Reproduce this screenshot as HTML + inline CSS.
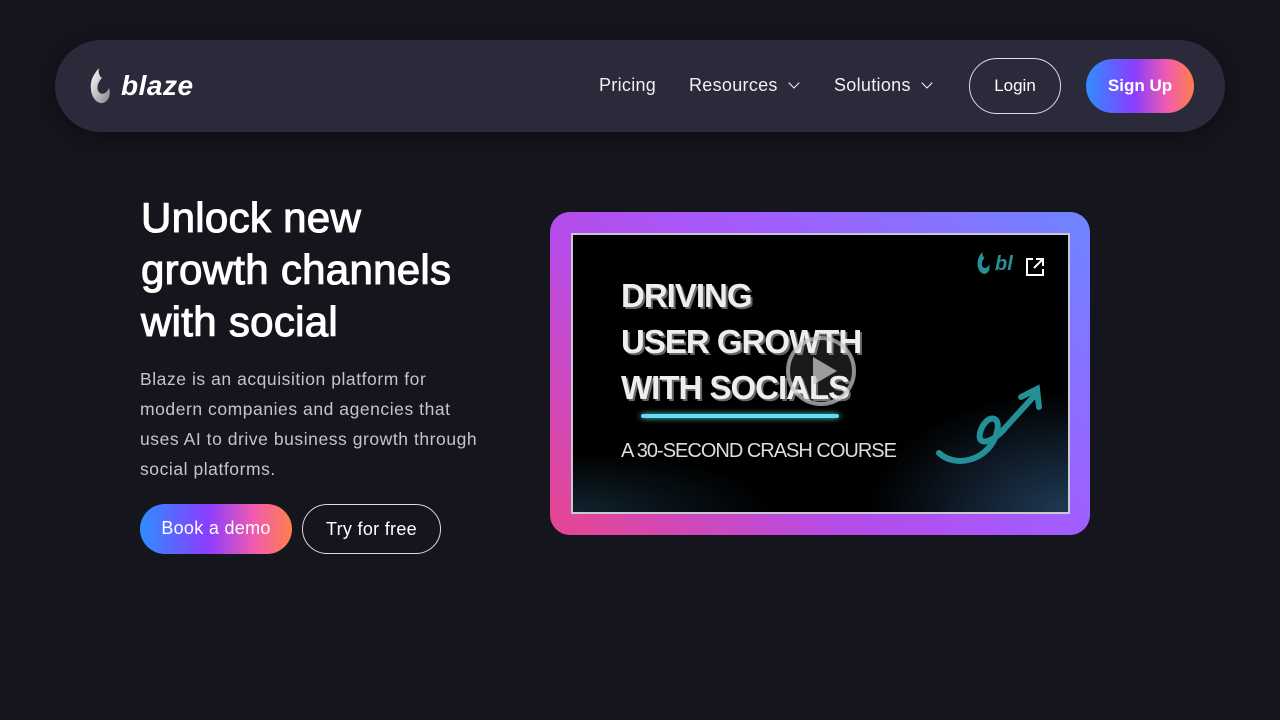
<!DOCTYPE html>
<html><head><meta charset="utf-8"><style>
*{margin:0;padding:0;box-sizing:border-box}
body{width:1280px;height:720px;background:#15151e;font-family:"Liberation Sans",sans-serif;color:#fff;position:relative;overflow:hidden}
.nav{position:absolute;left:55px;top:40px;width:1170px;height:92px;border-radius:46px;background:#2a2a3a;box-shadow:0 4px 20px rgba(0,0,0,.4)}
.logo{position:absolute;left:90px;top:68px;display:flex;align-items:center}
.logo span{font-size:28px;font-weight:bold;font-style:italic;margin-left:9px;letter-spacing:.5px}
.nl{position:absolute;top:75px;font-size:18px;color:#f0f0f5;letter-spacing:.3px}
.chev{display:inline-block;width:8px;height:8px;border-right:1.5px solid #fff;border-bottom:1.5px solid #fff;transform:rotate(45deg);margin-left:12px;position:relative;top:-4px}
.login{position:absolute;left:969px;top:58px;width:92px;height:56px;border:1px solid #ddd;border-radius:28px;text-align:center;line-height:54px;font-size:17px}
.signup{position:absolute;left:1086px;top:59px;width:108px;height:54px;border-radius:27px;background:linear-gradient(90deg,#2f8dff,#8a3dff 45%,#f05bb0 75%,#ff7f4a);text-align:center;line-height:54px;font-size:17px;font-weight:bold}
h1{position:absolute;left:141px;top:192px;font-size:42px;line-height:52px;font-weight:normal;letter-spacing:.3px;-webkit-text-stroke:1.1px #fff}
p{position:absolute;left:140px;top:364px;width:400px;font-size:17.5px;line-height:30px;color:#c4c4cc;letter-spacing:.55px;white-space:nowrap}
.demo{position:absolute;left:140px;top:504px;width:152px;height:50px;border-radius:25px;background:linear-gradient(90deg,#2f8dff,#8a3dff 45%,#f05bb0 75%,#ff7f4a);text-align:center;line-height:48px;font-size:18px;letter-spacing:.3px}
.try{position:absolute;left:302px;top:504px;width:139px;height:50px;border-radius:25px;border:1px solid #ddd;text-align:center;line-height:48px;font-size:18px;letter-spacing:.3px}
.vid{position:absolute;left:550px;top:212px;width:540px;height:323px;border-radius:20px;background:linear-gradient(45deg,#e8468e,#b64ce8 35%,#a35cff 60%,#6d86ff)}
.scr{position:absolute;left:571px;top:233px;width:499px;height:281px;border:2px solid #c8c8d0;background:radial-gradient(ellipse 200px 120px at 100% 100%,#1f3a55,transparent),radial-gradient(ellipse 200px 60px at 0% 100%,#10222e,transparent),#000;overflow:hidden}
.t{position:absolute;left:48px;font-size:33px;font-weight:bold;color:#eee;letter-spacing:-1px;text-shadow:2px 2px 0 #666}
.sub{position:absolute;left:48px;top:205px;font-size:20px;color:#ddd;letter-spacing:-1px}
.bar{position:absolute;left:68px;top:179px;width:198px;height:4px;background:#5ee0f0;box-shadow:0 0 6px #5ee0f0;border-radius:2px}
</style></head><body>
<div class="nav"></div>
<div class="logo"><svg width="22" height="36" viewBox="0 0 22 36"><defs><linearGradient id="g" x1="0" y1="0" x2="1" y2="1"><stop offset="0" stop-color="#fff"/><stop offset="1" stop-color="#888"/></linearGradient></defs><path d="M9 0C2 8 0 14 1 22C2 31 8 36 13 35C19 33 21 26 19 20C17 25 13 27 10 25C6 22 7 15 12 10C9 8 8 4 9 0Z" fill="url(#g)"/></svg><span>blaze</span></div>
<div class="nl" style="left:599px">Pricing</div>
<div class="nl" style="left:689px">Resources<i class="chev"></i></div>
<div class="nl" style="left:834px">Solutions<i class="chev"></i></div>
<div class="login">Login</div>
<div class="signup">Sign Up</div>
<h1>Unlock new<br>growth channels<br>with social</h1>
<p>Blaze is an acquisition platform for<br>modern companies and agencies that<br>uses AI to drive business growth through<br>social platforms.</p>
<div class="demo">Book a demo</div>
<div class="try">Try for free</div>
<div class="vid"></div>
<div class="scr">
<div class="t" style="top:42px">DRIVING</div>
<div class="t" style="top:88px">USER GROWTH</div>
<div class="t" style="top:134px">WITH SOCIALS</div>
<div class="bar"></div>
<div class="sub">A 30-SECOND CRASH COURSE</div>
<svg style="position:absolute;left:404px;top:16px" width="14" height="24" viewBox="0 0 22 36"><path d="M9 0C2 8 0 14 1 22C2 31 8 36 13 35C19 33 21 26 19 20C17 25 13 27 10 25C6 22 7 15 12 10C9 8 8 4 9 0Z" fill="#2a8f95"/></svg>
<div style="position:absolute;left:422px;top:18px;color:#2a8f95;font-weight:bold;font-style:italic;font-size:20px">bl</div>
<svg style="position:absolute;left:452px;top:22px" width="20" height="20" viewBox="0 0 20 20" fill="none" stroke="#fff" stroke-width="2"><path d="M8 2H2V18H18V12M11 2H18V9M18 2L9 11"/></svg>
<svg style="position:absolute;left:212px;top:100px" width="72" height="72" viewBox="0 0 72 72"><circle cx="36" cy="36" r="33" fill="rgba(255,255,255,.1)" stroke="rgba(200,200,200,.7)" stroke-width="4"/><path d="M28 22L52 36L28 50Z" fill="rgba(200,200,200,.75)"/></svg>
<svg style="position:absolute;left:362px;top:148px" width="110" height="90" viewBox="0 0 110 90" fill="none" stroke="#229096" stroke-width="6" stroke-linecap="round"><path d="M4 70C20 85 50 78 60 55C70 30 50 30 45 50C42 65 60 58 70 45L100 12"/><path d="M86 14L102 6L104 24"/></svg>
</div>
</body></html>
